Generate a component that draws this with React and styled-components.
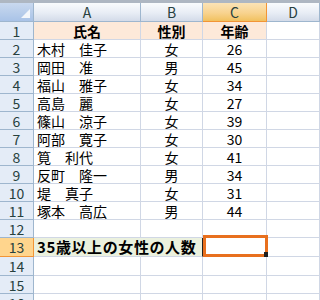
import React from 'react';
import styled, { createGlobalStyle, css } from 'styled-components';

const GlobalStyle = createGlobalStyle`
  html, body {
    margin: 0;
    padding: 0;
    background: #ffffff;
  }
  body {
    font-family: "Noto Sans CJK JP", "Liberation Sans", sans-serif;
  }
`;

const Frame = styled.div`
  width: 320px;
  height: 300px;
  overflow: hidden;
  border-top: 3px solid #aeb7c2;
  box-sizing: border-box;
`;

const Sheet = styled.div`
  display: grid;
  grid-template-columns: 34px 107px 62px 64px 53px;
  grid-template-rows: 19px repeat(12, 18px) 19px 19px 18px 18px;
`;

const Corner = styled.div`
  position: relative;
  background: linear-gradient(#c9d9ef, #a9c3e7);
  border-right: 1px solid #9eb6ce;
  border-bottom: 1px solid #9eb6ce;
  box-sizing: border-box;

  &::after {
    content: '';
    position: absolute;
    right: 3px;
    bottom: 3px;
    border-style: solid;
    border-width: 0 0 9px 9px;
    border-color: transparent transparent #f4f7fb transparent;
  }
`;

const ColHeader = styled.div`
  display: flex;
  align-items: center;
  justify-content: center;
  box-sizing: border-box;
  font-size: 14px;
  line-height: 16px;
  color: #27413e;
  background: linear-gradient(#f9fcfd 0%, #e8edf5 55%, #d3dbe9 100%);
  border-right: 1px solid #9eb6ce;
  border-bottom: 1px solid #9eb6ce;
  ${({ $active }) => $active && css`
    background: linear-gradient(#fbe3b6 0%, #f8d38f 55%, #f1c15f 100%);
    border-bottom-color: #f29536;
    border-right-color: #f29536;
  `}
`;

const RowHeader = styled.div`
  display: flex;
  align-items: center;
  justify-content: center;
  box-sizing: border-box;
  font-size: 14px;
  line-height: 16px;
  overflow: hidden;
  color: #27413e;
  background: #e4ecf7;
  border-right: 1px solid #9eb6ce;
  border-bottom: 1px solid #9eb6ce;
  ${({ $active }) => $active && css`
    background: #ffd58d;
    border-right-color: #f29536;
    border-bottom-color: #f29536;
  `}
`;

const Cell = styled.div`
  position: relative;
  display: flex;
  align-items: center;
  justify-content: ${({ $align }) => ($align === 'center' ? 'center' : 'flex-start')};
  padding-left: ${({ $align }) => ($align === 'center' ? '0' : '3px')};
  box-sizing: border-box;
  font-size: 14px;
  line-height: 16px;
  color: #000;
  white-space: nowrap;
  font-weight: ${({ $bold }) => ($bold ? 700 : 400)};
  background: ${({ $fill }) => $fill || '#fff'};
  border-right: 1px solid ${({ $edge }) => $edge || '#d0d7e5'};
  border-bottom: 1px solid #d0d7e5;
`;

const Overflow = styled.span`
  position: relative;
  z-index: 2;
  font-size: 15px;
  font-weight: 700;
  letter-spacing: 0.6px;
`;

const Selection = styled.div`
  position: absolute;
  top: -3px;
  left: 0;
  width: 65px;
  height: 22px;
  box-sizing: border-box;
  border: 3px solid #e8701e;
  z-index: 3;

  &::after {
    content: '';
    position: absolute;
    right: -3px;
    bottom: -3px;
    width: 4px;
    height: 5px;
    background: #1f1f1f;
  }
`;

const people = [
  ['木村　佳子', '女', '26'],
  ['岡田　准', '男', '45'],
  ['福山　雅子', '女', '34'],
  ['高島　麗', '女', '27'],
  ['篠山　涼子', '女', '39'],
  ['阿部　寛子', '女', '30'],
  ['筧　利代', '女', '41'],
  ['反町　隆一', '男', '34'],
  ['堤　真子', '女', '31'],
  ['塚本　高広', '男', '44'],
];

const HEAD = '#fde9d9';
const GREEN = '#ebf1de';

export default function App() {
  return (
    <>
      <GlobalStyle />
      <Frame>
        <Sheet>
          <Corner />
          <ColHeader>A</ColHeader>
          <ColHeader>B</ColHeader>
          <ColHeader $active>C</ColHeader>
          <ColHeader>D</ColHeader>

          <RowHeader>1</RowHeader>
          <Cell $align="center" $bold $fill={HEAD}>氏名</Cell>
          <Cell $align="center" $bold $fill={HEAD}>性別</Cell>
          <Cell $align="center" $bold $fill={HEAD}>年齢</Cell>
          <Cell />

          {people.map(([name, sex, age], i) => (
            <React.Fragment key={name}>
              <RowHeader>{i + 2}</RowHeader>
              <Cell>{name}</Cell>
              <Cell $align="center">{sex}</Cell>
              <Cell $align="center">{age}</Cell>
              <Cell />
            </React.Fragment>
          ))}

          <RowHeader>12</RowHeader>
          <Cell />
          <Cell />
          <Cell />
          <Cell />

          <RowHeader $active>13</RowHeader>
          <Cell $fill={GREEN} $edge={GREEN}>
            <Overflow>35歳以上の女性の人数</Overflow>
          </Cell>
          <Cell $fill={GREEN} $edge="#222" />
          <Cell>
            <Selection />
          </Cell>
          <Cell />

          {[14, 15, 16].map((n) => (
            <React.Fragment key={n}>
              <RowHeader>{n}</RowHeader>
              <Cell />
              <Cell />
              <Cell />
              <Cell />
            </React.Fragment>
          ))}
        </Sheet>
      </Frame>
    </>
  );
}
